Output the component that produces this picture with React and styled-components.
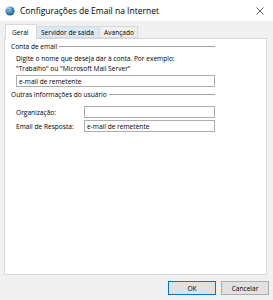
import React from 'react';
import styled, { createGlobalStyle } from 'styled-components';

const Global = createGlobalStyle`
  html, body { margin: 0; padding: 0; }
  body { font-family: "Open Sans", "Noto Sans", sans-serif; }
`;

const Window = styled.div`
  width: 273px;
  height: 300px;
  background: #f0f0f0;
  display: flex;
  flex-direction: column;
  font-size: 6.6px;
  color: #000;
  overflow: hidden;
`;

const TitleBar = styled.div`
  height: 21px;
  background: #fff;
  display: flex;
  align-items: center;
  padding: 0 6px 0 5px;
  gap: 5px;
`;

const Title = styled.div`
  flex: 1;
  font-size: 8.5px;
  color: #000;
`;

const Close = styled.div`
  width: 14px;
  display: flex;
  justify-content: center;
`;

const Body = styled.div`
  flex: 1;
  display: flex;
  flex-direction: column;
  padding: 2px 4px 5px 4px;
`;

const TabRow = styled.div`
  display: flex;
  align-items: flex-end;
  height: 15px;
  padding-left: 1px;
  position: relative;
  z-index: 1;
`;

const Tab = styled.div`
  height: ${p => (p.$active ? '15px' : '12px')};
  width: ${p => p.$w}px;
  padding-left: ${p => (p.$active ? '6px' : '4px')};
  display: flex;
  align-items: center;
  border: 1px solid #d9d9d9;
  border-bottom: ${p => (p.$active ? 'none' : '1px solid #d9d9d9')};
  margin-left: ${p => (p.$active ? '0' : '-1px')};
  background: ${p => (p.$hover ? '#d8eaf9' : p.$active ? '#fff' : '#f0f0f0')};
  box-sizing: border-box;
  margin-bottom: ${p => (p.$active ? '-1px' : '0')};
`;

const Panel = styled.div`
  flex: 1;
  background: #fff;
  border: 1px solid #d9d9d9;
  margin-right: 2px;
  padding: 1px 51px 0 6px;
  display: flex;
  flex-direction: column;
`;

const Group = styled.div`
  display: flex;
  align-items: center;
  gap: 2px;
  height: 12px;
  margin-top: ${p => p.$gap || 0}px;
  &::after {
    content: '';
    flex: 1;
    border-top: 1px solid #a0a0a0;
    margin-top: 1px;
  }
`;

const Indent = styled.div`
  padding-left: 5px;
  display: flex;
  flex-direction: column;
`;

const Para = styled.div`
  line-height: 10px;
  margin-top: 2px;
`;

const Input = styled.div`
  height: 12px;
  border: 1px solid #adadad;
  box-sizing: border-box;
  display: flex;
  align-items: center;
  padding-left: 2px;
  background: #fff;
  margin-top: ${p => p.$gap || 0}px;
`;

const Field = styled.div`
  display: grid;
  grid-template-columns: 68px 1fr;
  align-items: center;
  margin-top: ${p => p.$gap || 0}px;
`;

const Buttons = styled.div`
  display: flex;
  justify-content: flex-end;
  gap: 5px;
  padding-top: 6px;
`;

const Button = styled.div`
  width: 48px;
  height: 14px;
  box-sizing: border-box;
  border: 1px solid ${p => (p.$default ? '#0078d7' : '#adadad')};
  background: #e1e1e1;
  display: flex;
  align-items: center;
  justify-content: center;
`;

const Globe = () => (
  <svg width="10" height="10" viewBox="0 0 10 10">
    <defs>
      <radialGradient id="g" cx="35%" cy="30%" r="75%">
        <stop offset="0" stopColor="#bfe3ff" />
        <stop offset="0.5" stopColor="#3d8fd6" />
        <stop offset="1" stopColor="#1d4f8f" />
      </radialGradient>
    </defs>
    <circle cx="5" cy="5" r="4.6" fill="url(#g)" />
    <path d="M2.2 3.2 Q3.5 2.2 4.6 3.4 Q4 4.6 3.2 5.6 Q2 5 2.2 3.2Z" fill="#5aa84a" />
    <path d="M5.6 5.2 Q7.4 4.8 7.8 6.4 Q6.8 8 5.8 7.6 Z" fill="#5aa84a" />
  </svg>
);

const CloseIcon = () => (
  <svg width="8" height="8" viewBox="0 0 8 8">
    <path d="M0.5 0.5 L7.5 7.5 M7.5 0.5 L0.5 7.5" stroke="#333" strokeWidth="0.8" />
  </svg>
);

export default function App() {
  return (
    <>
      <Global />
      <Window>
        <TitleBar>
          <Globe />
          <Title>Configurações de Email na Internet</Title>
          <Close>
            <CloseIcon />
          </Close>
        </TitleBar>
        <Body>
          <TabRow>
            <Tab $active $w={32}>Geral</Tab>
            <Tab $hover $w={64}>Servidor de saída</Tab>
            <Tab $w={39}>Avançado</Tab>
          </TabRow>
          <Panel>
            <Group>Conta de email</Group>
            <Indent>
              <Para>
                Digite o nome que deseja dar à conta. Por exemplo:
                <br />
                "Trabalho" ou "Microsoft Mail Server"
              </Para>
              <Input $gap={1}>e-mail de remetente</Input>
            </Indent>
            <Group $gap={1}>Outras informações do usuário</Group>
            <Indent>
              <Field $gap={6}>
                <span>Organização:</span>
                <Input />
              </Field>
              <Field $gap={2}>
                <span>Email de Resposta:</span>
                <Input>e-mail de remetente</Input>
              </Field>
            </Indent>
          </Panel>
          <Buttons>
            <Button $default>OK</Button>
            <Button>Cancelar</Button>
          </Buttons>
        </Body>
      </Window>
    </>
  );
}
